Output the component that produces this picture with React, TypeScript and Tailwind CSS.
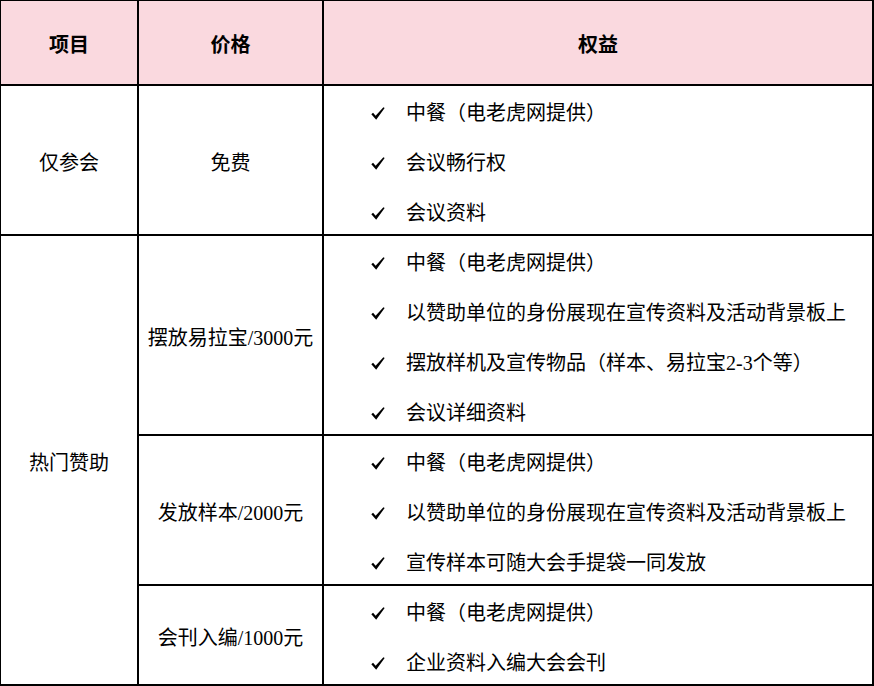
import React from "react";

const FONT = { fontFamily: '"Liberation Serif", "Noto Sans CJK SC", serif' };

function Check() {
  return (
    <svg width="14" height="13" viewBox="0 0 13 12" className="shrink-0">
      <path d="M0.3 6.7 L1.9 5.3 L4.3 8.2 L11.5 0.2 L12.7 1.0 L4.8 11.7 Z" fill="#000" />
    </svg>
  );
}

function Items({ items }: { items: string[] }) {
  return (
    <div className="border-r-2 border-b-2 border-black flex flex-col justify-center pl-[47px] pt-[6px]">
      {items.map((t, i) => (
        <div key={i} className="h-[50px] shrink-0 flex items-center">
          <div className="w-[35px] flex items-center">
            <Check />
          </div>
          <span className="whitespace-nowrap">{t}</span>
        </div>
      ))}
    </div>
  );
}

function Cell({ children, className = "" }: { children?: React.ReactNode; className?: string }) {
  return (
    <div className={"border-r-2 border-b-2 border-black flex items-center justify-center whitespace-nowrap pt-[5px] " + className}>
      {children}
    </div>
  );
}

export default function App() {
  return (
    <div className="w-[874px] h-[686px] bg-white overflow-hidden text-black text-[20px]" style={FONT}>
      <div className="grid grid-cols-[138px_185px_550px] grid-rows-[85px_150px_200px_150px_100px] border-t border-l border-black w-[874px]">
        <Cell className="bg-[#fad9df] font-bold">项目</Cell>
        <Cell className="bg-[#fad9df] font-bold">价格</Cell>
        <Cell className="bg-[#fad9df] font-bold">权益</Cell>

        <Cell>仅参会</Cell>
        <Cell>免费</Cell>
        <Items items={["中餐（电老虎网提供）", "会议畅行权", "会议资料"]} />

        <Cell className="row-span-3">热门赞助</Cell>
        <Cell>摆放易拉宝/3000元</Cell>
        <Items
          items={[
            "中餐（电老虎网提供）",
            "以赞助单位的身份展现在宣传资料及活动背景板上",
            "摆放样机及宣传物品（样本、易拉宝2-3个等）",
            "会议详细资料",
          ]}
        />
        <Cell>发放样本/2000元</Cell>
        <Items
          items={[
            "中餐（电老虎网提供）",
            "以赞助单位的身份展现在宣传资料及活动背景板上",
            "宣传样本可随大会手提袋一同发放",
          ]}
        />
        <Cell>会刊入编/1000元</Cell>
        <Items items={["中餐（电老虎网提供）", "企业资料入编大会会刊"]} />
      </div>
    </div>
  );
}
